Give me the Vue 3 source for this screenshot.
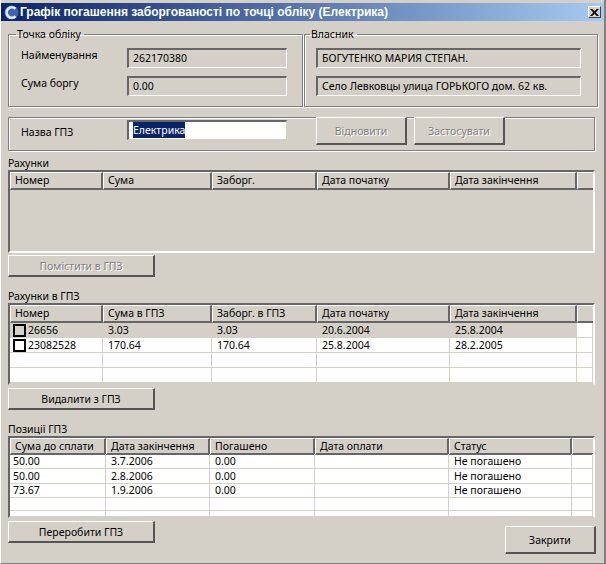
<template>
  <div class="window">
    <div class="titlebar">
      <svg class="titlebar__icon" width="15" height="15" viewBox="0 0 15 15">
        <circle cx="7.500" cy="7.500" r="7" fill="#3f63a8" />
        <path d="M11.500 3.800A5.200 5.200 0 1 0 11.500 11.200" fill="none" stroke="#dfe9f7" stroke-width="2.800" />
      </svg>
      <span class="titlebar__text">Графік погашення заборгованості по точці обліку (Електрика)</span>
      <button class="titlebar__close">
        <svg width="9" height="7" viewBox="0 0 9 7">
          <path d="M0 0h2.200L4.500 2.300 6.800 0H9L5.700 3.500 9 7H6.800L4.500 4.700 2.200 7H0L3.300 3.500z" fill="#000" />
        </svg>
      </button>
    </div>

    <div class="content">
      <div class="groups">
        <fieldset class="group group--point">
          <legend>Точка обліку</legend>
          <div class="field">
            <label>Найменування</label>
            <div class="readonly">262170380</div>
          </div>
          <div class="field">
            <label>Сума боргу</label>
            <div class="readonly">0.00</div>
          </div>
        </fieldset>
        <fieldset class="group group--owner">
          <legend>Власник</legend>
          <div class="readonly readonly--wide">БОГУТЕНКО МАРИЯ СТЕПАН.</div>
          <div class="readonly readonly--wide">Село Левковцы улица ГОРЬКОГО дом. 62 кв.</div>
        </fieldset>
      </div>

      <div class="name-bar">
        <label>Назва ГПЗ</label>
        <div class="name-input"><span class="name-input__sel">Електрика</span></div>
        <button class="btn btn--small btn--off">Відновити</button>
        <button class="btn btn--small btn--off">Застосувати</button>
      </div>

      <div class="caption caption--first">Рахунки</div>
      <div class="table table--empty">
        <div class="row row--head">
          <div v-for="h in billHead" :key="h" class="cell">{{ h }}</div>
        </div>
      </div>
      <button class="btn btn--off btn--first">Помістити в ГПЗ</button>

      <div class="caption">Рахунки в ГПЗ</div>
      <div class="table">
        <div class="row row--head">
          <div v-for="h in gpzHead" :key="h" class="cell">{{ h }}</div>
        </div>
        <div
          v-for="(r, i) in gpzRows"
          :key="i"
          :class="['row', 'row--body', { 'row--selected': i === 0 }]"
        >
          <div v-for="(c, j) in r" :key="j" class="cell">
            <span v-if="j === 0 && c" class="check" />{{ c }}
          </div>
        </div>
      </div>
      <button class="btn btn--below">Видалити з ГПЗ</button>

      <div class="caption">Позиції ГПЗ</div>
      <div class="table table--pos">
        <div class="row row--head">
          <div v-for="h in posHead" :key="h" class="cell">{{ h }}</div>
        </div>
        <div v-for="(r, i) in posRows" :key="i" class="row row--body">
          <div v-for="(c, j) in r" :key="j" class="cell">{{ c }}</div>
        </div>
      </div>

      <div class="footer">
        <button class="btn">Переробити ГПЗ</button>
        <button class="btn btn--small btn--close">Закрити</button>
      </div>
    </div>
  </div>
</template>

<script setup>
const billHead = ['Номер', 'Сума', 'Заборг.', 'Дата початку', 'Дата закінчення', '']
const gpzHead = ['Номер', 'Сума в ГПЗ', 'Заборг. в ГПЗ', 'Дата початку', 'Дата закінчення', '']
const gpzRows = [
  ['26656', '3.03', '3.03', '20.6.2004', '25.8.2004', ''],
  ['23082528', '170.64', '170.64', '25.8.2004', '28.2.2005', ''],
  ['', '', '', '', '', ''],
  ['', '', '', '', '', '']
]
const posHead = ['Сума до сплати', 'Дата закінчення', 'Погашено', 'Дата оплати', 'Статус', '']
const posRows = [
  ['50.00', '3.7.2006', '0.00', '', 'Не погашено', ''],
  ['50.00', '2.8.2006', '0.00', '', 'Не погашено', ''],
  ['73.67', '1.9.2006', '0.00', '', 'Не погашено', ''],
  ['', '', '', '', '', ''],
  ['', '', '', '', '', '']
]
</script>

<style>
html,
body {
  margin: 0;
  background: #d4d0c8;
}
</style>

<style scoped>
.window {
  width: 606px;
  height: 564px;
  box-sizing: border-box;
  padding-top: 3px;
  background: #d4d0c8;
  border-left: 1px solid #fff;
  border-right: 2px solid #808080;
  border-bottom: 1px solid #808080;
  font-family: "Noto Sans", "Liberation Sans", sans-serif;
  font-size: 10.5px;
  color: #000;
  overflow: hidden;
}

.titlebar {
  height: 18px;
  display: flex;
  align-items: center;
  background: linear-gradient(to right, #0a246a, #a6caf0);
}

.titlebar__icon {
  margin-left: 3px;
  flex: none;
}

.titlebar__text {
  margin-left: 1px;
  font-family: "Liberation Sans", sans-serif;
  font-size: 12px;
  font-weight: bold;
  color: #fff;
  white-space: nowrap;
}

.titlebar__close {
  margin-left: auto;
  margin-right: 3px;
  width: 13px;
  height: 12px;
  padding: 0;
  display: flex;
  align-items: center;
  justify-content: center;
  background: #d4d0c8;
  border: 1px solid;
  border-color: #fff #404040 #404040 #fff;
}

.content {
  padding-left: 7px;
  width: 592px;
}

.groups {
  display: flex;
  margin-top: 6px;
}

.group {
  margin: 0;
  padding: 7px 0 0;
  height: 80px;
  box-sizing: border-box;
  border: 1px solid #808080;
  box-shadow: 1px 1px 0 #fff, inset 1px 1px 0 #fff;
}

.group legend {
  padding: 0 3px 0 1px;
  line-height: 14px;
}

.group--point {
  width: 295px;
  padding-left: 12px;
}

.group--point legend {
  margin-left: -5px;
}

.group--owner {
  width: 294px;
  margin-left: 1px;
  padding-left: 11px;
}

.group--owner legend {
  margin-left: -6px;
}

.field {
  display: flex;
  align-items: flex-start;
  margin-bottom: 8px;
}

.field label {
  width: 106px;
  line-height: 14px;
}

.readonly {
  width: 160px;
  height: 20px;
  box-sizing: border-box;
  padding-left: 4px;
  line-height: 16px;
  border-style: solid;
  border-width: 2px 1px 1px 2px;
  border-color: #666 #fff #fff #666;
}

.readonly--wide {
  width: 265px;
  margin-bottom: 8px;
}

.name-bar {
  display: flex;
  align-items: flex-start;
  width: 587px;
  height: 34px;
  box-sizing: border-box;
  margin-top: 10px;
  border: 1px solid #808080;
  box-shadow: 1px 1px 0 #fff, inset 1px 1px 0 #fff;
}

.name-bar label {
  width: 106px;
  margin: 7px 0 0 12px;
  line-height: 14px;
}

.name-input {
  width: 160px;
  height: 20px;
  box-sizing: border-box;
  margin-top: 2px;
  padding-left: 4px;
  line-height: 16px;
  background: #fff;
  border-style: solid;
  border-width: 2px 1px 1px 2px;
  border-color: #666 #d4d0c8 #d4d0c8 #666;
}

.name-input__sel {
  display: inline-block;
  background: #0a246a;
  color: #fff;
}

.btn {
  display: block;
  width: 147px;
  height: 22px;
  padding: 0;
  background: #d4d0c8;
  font: inherit;
  color: #000;
  border-style: solid;
  border-width: 1px 2px 2px 1px;
  border-color: #fff #555 #555 #fff;
}

.btn--small {
  width: 91px;
  height: 28px;
}

.name-bar .btn {
  margin-top: -1px;
}

.name-bar .btn:first-of-type {
  margin-left: 29px;
}

.name-bar .btn + .btn {
  margin-left: 7px;
}

.btn--off {
  color: #808080;
  text-shadow: 1px 1px 0 #fff;
}

.btn--first {
  margin-top: 2px;
}

.btn--below {
  margin-top: 3px;
}

.btn--close {
  margin: 5px 0 0 350px;
}

.caption {
  line-height: 14px;
  margin-top: 12px;
}

.caption--first {
  margin-top: 5px;
}

.table {
  width: 587px;
  height: 82px;
  box-sizing: border-box;
  overflow: hidden;
  border-style: solid;
  border-width: 2px;
  border-color: #666 #fff #d4d0c8 #666;
  --c: 93px 109px 105px 133px 127px 16px;
}

.table--empty {
  height: 83px;
  border-bottom-color: #fff;
}

.table--pos {
  --c: 96px 104px 105px 134px 123px 21px;
}

.row {
  display: grid;
  grid-template-columns: var(--c);
}

.row--head {
  height: 18px;
}

.table--pos .row--head {
  height: 16px;
}

.row--head .cell {
  box-sizing: border-box;
  padding-left: 4px;
  line-height: 15px;
  border-style: solid;
  border-width: 1px 2px 2px 1px;
  border-color: #fff #666 #666 #fff;
  white-space: nowrap;
}

.table--pos .row--head .cell {
  line-height: 14px;
}

.row--head .cell:last-child {
  border-right: 0;
}

.row--body {
  height: 15px;
  background: #fff;
}

.table--pos .row--body {
  height: 14px;
}

.table--pos .row--head + .row--body {
  height: 15px;
}

.row--body .cell {
  box-sizing: border-box;
  padding: 1px 0 0 5px;
  line-height: 13px;
  border-right: 1px solid #d4d0c8;
  border-bottom: 1px solid #d4d0c8;
  white-space: nowrap;
  display: flex;
  align-items: center;
}

.row--body .cell:first-child {
  padding-left: 3px;
}

.row--selected .cell {
  background: #d4d0c8;
}

.row--selected .cell:last-child {
  background: #fff;
}

.check {
  flex: none;
  width: 9px;
  height: 9px;
  margin-right: 2px;
  background: #fff;
  border: 2px solid #000;
}

.row--selected .check {
  background: #d4d0c8;
}

.footer {
  display: flex;
  align-items: flex-start;
  margin-top: 3px;
}
</style>
